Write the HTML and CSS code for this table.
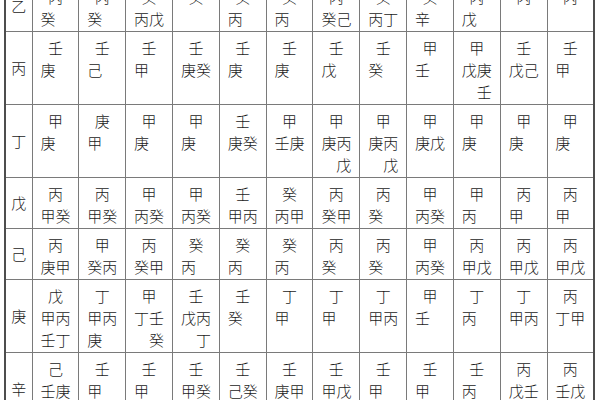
FILE: index.html
```html
<!DOCTYPE html>
<html lang="zh">
<head>
<meta charset="utf-8">
<link rel="stylesheet" href="styles.css">
</head>
<body>
<table class="grid">
<colgroup><col class="hc"><col span="12"></colgroup>
<tr><th>乙</th>
<td><div class="s"><span class="t">丙</span><span>癸</span></div></td>
<td><div class="s"><span class="t">丙</span><span>癸</span></div></td>
<td><div class="s"><span class="t">癸</span><span>丙戊</span></div></td>
<td><div class="s"><span class="t">癸</span></div></td>
<td><div class="s"><span class="t">癸</span><span>丙</span></div></td>
<td><div class="s"><span class="t">癸</span><span>丙</span></div></td>
<td><div class="s"><span class="t">丙</span><span>癸己</span></div></td>
<td><div class="s"><span class="t">癸</span><span>丙丁</span></div></td>
<td><div class="s"><span class="t">癸</span><span>辛</span></div></td>
<td><div class="s"><span class="t">丙</span><span>戊</span></div></td>
<td><div class="s"><span class="t">丙</span></div></td>
<td><div class="s"><span class="t">丙</span></div></td>
</tr>
<tr><th>丙</th>
<td><div class="s"><span class="t">壬</span><span>庚</span></div></td>
<td><div class="s"><span class="t">壬</span><span>己</span></div></td>
<td><div class="s"><span class="t">壬</span><span>甲</span></div></td>
<td><div class="s"><span class="t">壬</span><span>庚癸</span></div></td>
<td><div class="s"><span class="t">壬</span><span>庚</span></div></td>
<td><div class="s"><span class="t">壬</span><span>庚</span></div></td>
<td><div class="s"><span class="t">壬</span><span>戊</span></div></td>
<td><div class="s"><span class="t">壬</span><span>癸</span></div></td>
<td><div class="s"><span class="t">甲</span><span>壬</span></div></td>
<td><div class="s"><span class="t">甲</span><span>戊庚</span><span class="r">壬</span></div></td>
<td><div class="s"><span class="t">壬</span><span>戊己</span></div></td>
<td><div class="s"><span class="t">壬</span><span>甲</span></div></td>
</tr>
<tr><th>丁</th>
<td><div class="s"><span class="t">甲</span><span>庚</span></div></td>
<td><div class="s"><span class="t">庚</span><span>甲</span></div></td>
<td><div class="s"><span class="t">甲</span><span>庚</span></div></td>
<td><div class="s"><span class="t">甲</span><span>庚</span></div></td>
<td><div class="s"><span class="t">壬</span><span>庚癸</span></div></td>
<td><div class="s"><span class="t">甲</span><span>壬庚</span></div></td>
<td><div class="s"><span class="t">甲</span><span>庚丙</span><span class="r">戊</span></div></td>
<td><div class="s"><span class="t">甲</span><span>庚丙</span><span class="r">戊</span></div></td>
<td><div class="s"><span class="t">甲</span><span>庚戊</span></div></td>
<td><div class="s"><span class="t">甲</span><span>庚</span></div></td>
<td><div class="s"><span class="t">甲</span><span>庚</span></div></td>
<td><div class="s"><span class="t">甲</span><span>庚</span></div></td>
</tr>
<tr><th>戊</th>
<td><div class="s"><span class="t">丙</span><span>甲癸</span></div></td>
<td><div class="s"><span class="t">丙</span><span>甲癸</span></div></td>
<td><div class="s"><span class="t">甲</span><span>丙癸</span></div></td>
<td><div class="s"><span class="t">甲</span><span>丙癸</span></div></td>
<td><div class="s"><span class="t">壬</span><span>甲丙</span></div></td>
<td><div class="s"><span class="t">癸</span><span>丙甲</span></div></td>
<td><div class="s"><span class="t">丙</span><span>癸甲</span></div></td>
<td><div class="s"><span class="t">丙</span><span>癸</span></div></td>
<td><div class="s"><span class="t">甲</span><span>丙癸</span></div></td>
<td><div class="s"><span class="t">甲</span><span>丙</span></div></td>
<td><div class="s"><span class="t">丙</span><span>甲</span></div></td>
<td><div class="s"><span class="t">丙</span><span>甲</span></div></td>
</tr>
<tr><th>己</th>
<td><div class="s"><span class="t">丙</span><span>庚甲</span></div></td>
<td><div class="s"><span class="t">甲</span><span>癸丙</span></div></td>
<td><div class="s"><span class="t">丙</span><span>癸甲</span></div></td>
<td><div class="s"><span class="t">癸</span><span>丙</span></div></td>
<td><div class="s"><span class="t">癸</span><span>丙</span></div></td>
<td><div class="s"><span class="t">癸</span><span>丙</span></div></td>
<td><div class="s"><span class="t">丙</span><span>癸</span></div></td>
<td><div class="s"><span class="t">丙</span><span>癸</span></div></td>
<td><div class="s"><span class="t">甲</span><span>丙癸</span></div></td>
<td><div class="s"><span class="t">丙</span><span>甲戊</span></div></td>
<td><div class="s"><span class="t">丙</span><span>甲戊</span></div></td>
<td><div class="s"><span class="t">丙</span><span>甲戊</span></div></td>
</tr>
<tr><th>庚</th>
<td><div class="s"><span class="t">戊</span><span>甲丙</span><span>壬丁</span></div></td>
<td><div class="s"><span class="t">丁</span><span>甲丙</span><span>庚</span></div></td>
<td><div class="s"><span class="t">甲</span><span>丁壬</span><span class="r">癸</span></div></td>
<td><div class="s"><span class="t">壬</span><span>戊丙</span><span class="r">丁</span></div></td>
<td><div class="s"><span class="t">壬</span><span>癸</span></div></td>
<td><div class="s"><span class="t">丁</span><span>甲</span></div></td>
<td><div class="s"><span class="t">丁</span><span>甲</span></div></td>
<td><div class="s"><span class="t">丁</span><span>甲丙</span></div></td>
<td><div class="s"><span class="t">甲</span><span>壬</span></div></td>
<td><div class="s"><span class="t">丁</span><span>丙</span></div></td>
<td><div class="s"><span class="t">丁</span><span>甲丙</span></div></td>
<td><div class="s"><span class="t">丙</span><span>丁甲</span></div></td>
</tr>
<tr><th>辛</th>
<td><div class="s"><span class="t">己</span><span>壬庚</span></div></td>
<td><div class="s"><span class="t">壬</span><span>甲</span></div></td>
<td><div class="s"><span class="t">壬</span><span>甲</span></div></td>
<td><div class="s"><span class="t">壬</span><span>甲癸</span></div></td>
<td><div class="s"><span class="t">壬</span><span>己癸</span></div></td>
<td><div class="s"><span class="t">壬</span><span>庚甲</span></div></td>
<td><div class="s"><span class="t">壬</span><span>甲戊</span></div></td>
<td><div class="s"><span class="t">壬</span><span>甲</span></div></td>
<td><div class="s"><span class="t">壬</span><span>甲</span></div></td>
<td><div class="s"><span class="t">壬</span><span>丙</span></div></td>
<td><div class="s"><span class="t">丙</span><span>戊壬</span><span class="r">甲</span></div></td>
<td><div class="s"><span class="t">丙</span><span>壬戊</span><span class="r">己</span></div></td>
</tr>
</table>
</body>
</html>
```
FILE: styles.css
```css
html, body {
  margin: 0;
  padding: 0;
  background: #ffffff;
}
body {
  font-family: "Noto Sans CJK SC", "Noto Sans CJK JP", sans-serif;
  color: #1a1a1a;
  overflow: hidden;
}
.grid {
  border-collapse: collapse;
  table-layout: fixed;
  width: 591px;
  margin: -21px 0 0 4px;
  border: 2px solid #4d4d4d;
  font-size: 15px;
  font-weight: 300;
  line-height: 22px;
}
.grid .hc {
  width: 27px;
}
.grid th,
.grid td {
  border: 1px solid #7a7a7a;
  padding: 5px 0 1px;
}
.grid th {
  font-weight: 300;
  vertical-align: middle;
  text-align: center;
  padding: 0;
}
.grid td {
  vertical-align: top;
}
.s {
  width: 30px;
  margin: 0 auto;
}
.s span {
  display: block;
  white-space: nowrap;
}
.s .t {
  text-align: center;
}
.s .r {
  text-align: right;
}
```
